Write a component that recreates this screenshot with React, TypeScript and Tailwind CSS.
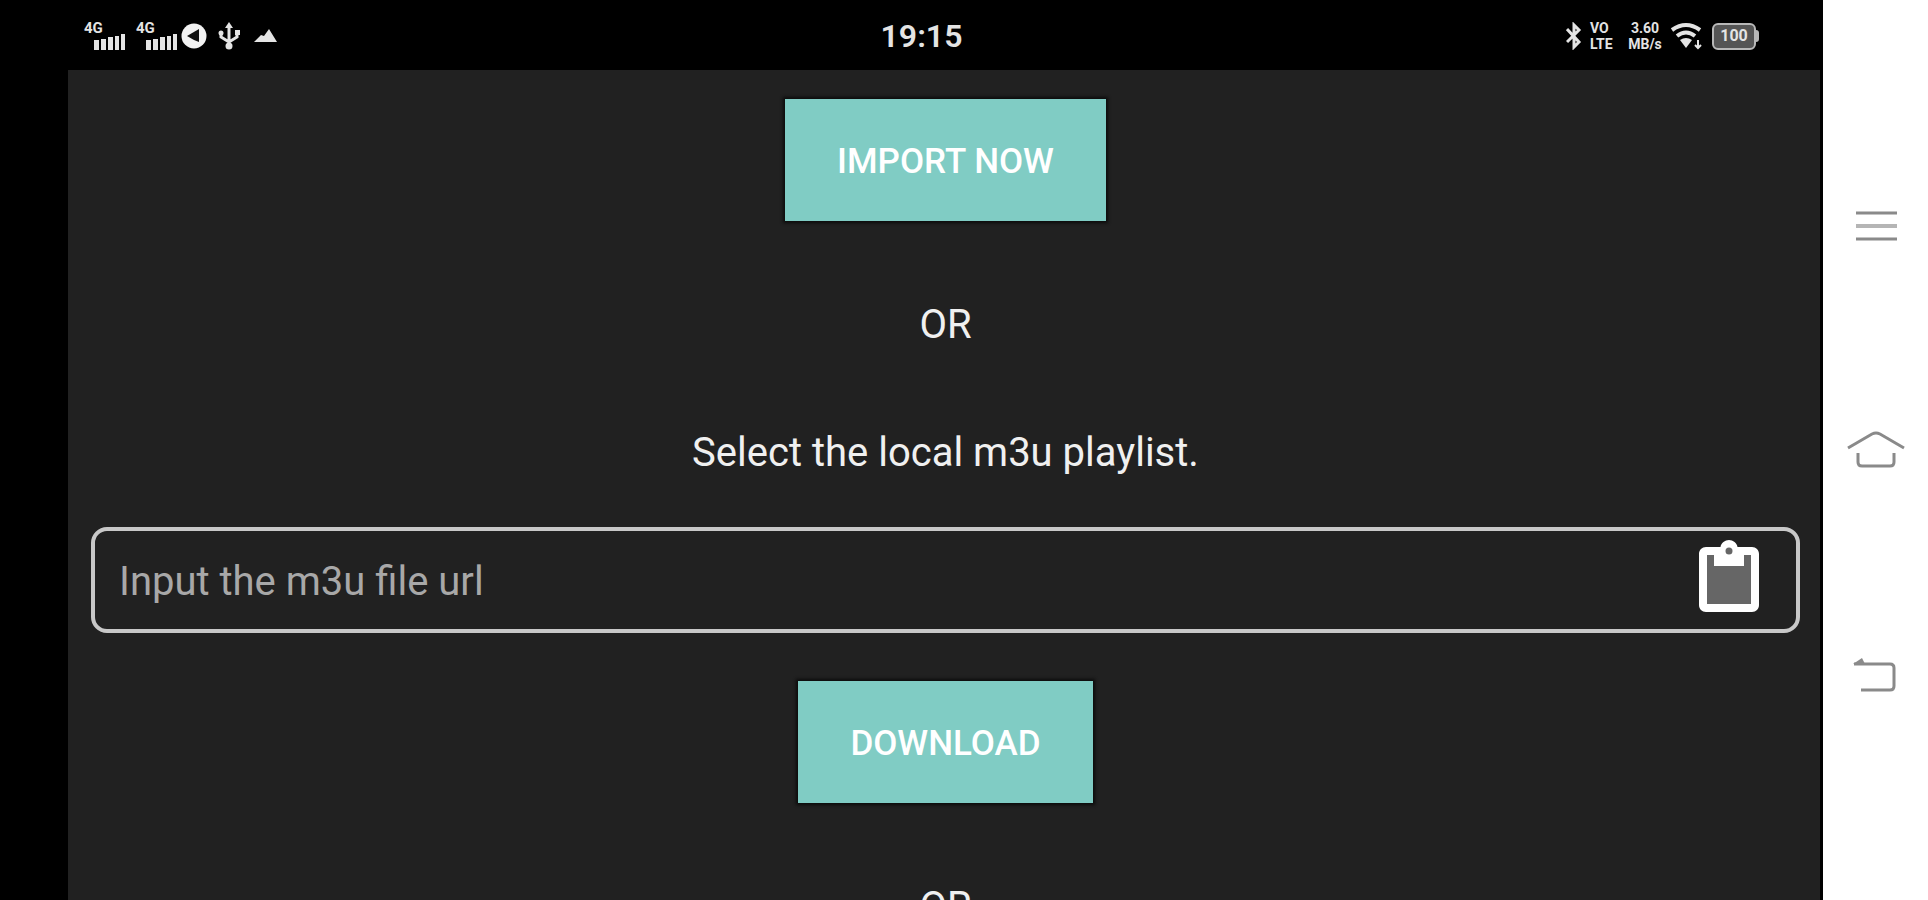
import React, { useState } from "react";

interface ActionButtonProps {
  children: React.ReactNode;
  onClick?: () => void;
}

function ActionButton({ children, onClick }: ActionButtonProps) {
  return (
    <button
      type="button"
      onClick={onClick}
      className="h-[122px] shrink-0 px-[52px] pt-1 bg-[#80ccc4] text-white text-[35px] leading-10 font-medium uppercase whitespace-nowrap shadow-[0_0_3px_2px_#0c0c0c]"
    >
      {children}
    </button>
  );
}

function Signal() {
  return (
    <div className="flex flex-col w-[42px]">
      <span className="text-[15px] leading-3 font-bold">4G</span>
      <svg viewBox="0 0 32 16" className="w-8 h-4 self-end" fill="currentColor">
        <rect x="0" y="6" width="5" height="10" />
        <rect x="7" y="5" width="5" height="11" />
        <rect x="14" y="3" width="5" height="13" />
        <rect x="21" y="2" width="4" height="14" />
        <rect x="27" y="0" width="4" height="16" />
      </svg>
    </div>
  );
}

function StatusBar() {
  return (
    <header className="grid grid-cols-[1fr_auto_1fr] items-center h-[70px] shrink-0 pl-[84px] pr-[64px] pt-0.5 bg-black text-[#e4e4e4]">
      <div className="flex items-center gap-2.5">
        <Signal />
        <Signal />
        {/* Messenger notification */}
        <svg viewBox="0 0 28 28" className="w-7 h-7 -ml-2" >
          <circle cx="14" cy="14" r="12.5" fill="#f2f2f2" />
          <path d="M7 14l12-7v13l-5-2z" fill="#111" />
        </svg>
        {/* USB */}
        <svg viewBox="0 0 22 28" className="w-[22px] h-7" fill="none" stroke="currentColor" strokeWidth="3">
          <path d="M11 3v23M3 10v5l8 5 8-5v-5" />
          <path d="M11 0l4 6H7z" fill="currentColor" stroke="none" />
          <circle cx="3" cy="11" r="2.5" fill="currentColor" stroke="none" />
          <rect x="17" y="8" width="5" height="5" fill="currentColor" stroke="none" />
          <circle cx="11" cy="24" r="3.5" fill="currentColor" stroke="none" />
        </svg>
        <svg viewBox="0 0 24 14" className="w-6 h-3.5 ml-1" fill="currentColor">
          <path d="M0 13l7-7 3 1 5-7 8 13z" />
        </svg>
      </div>

      <time className="text-[32px] leading-9 font-semibold">19:15</time>

      <div className="flex items-center justify-end gap-2">
        {/* Bluetooth */}
        <svg viewBox="0 0 16 28" className="w-4 h-7" fill="none" stroke="currentColor" strokeWidth="3">
          <path d="M1 7l12 13-5 5V3l5 5L1 20" />
        </svg>
        <div className="flex flex-col w-[30px] text-[14px] leading-4 font-bold">
          <span>VO</span>
          <span>LTE</span>
        </div>
        <div className="flex flex-col items-center w-[34px] text-[14px] leading-4 font-bold">
          <span>3.60</span>
          <span>MB/s</span>
        </div>
        {/* Wi-Fi */}
        <svg viewBox="0 0 34 28" className="w-[34px] h-7" fill="none" stroke="currentColor" strokeWidth="4">
          <path d="M2 8q14-10 28 0M7 14q9-7 18 0" />
          <path d="M16 26l-6-8q6-4 12 0z" fill="currentColor" stroke="none" />
          <path d="M28 18v8M25 23l3 3 3-3" strokeWidth="2" />
        </svg>
        <div className="flex items-center">
          <div className="flex items-center justify-center w-11 h-[27px] border-2 border-[#b8b8b8] rounded-md bg-[#555] text-[16px] leading-5 font-bold">
            100
          </div>
          <div className="w-[3px] h-3 rounded-r bg-[#b8b8b8]" />
        </div>
      </div>
    </header>
  );
}

function ClipboardIcon() {
  return (
    <svg viewBox="0 0 60 72" className="w-[60px] h-[72px]">
      <rect x="4" y="10" width="52" height="58" rx="4" fill="#666" />
      <path
        d="M7 7h14.5C22 3 26 0 30 0s8 3 8.500 7H53c4 0 7 3 7 7v51c0 4-3 7-7 7H7c-4 0-7-3-7-7V14c0-4 3-7 7-7zm1 8v49h44V15h-7v11H15V15z"
        fill="#fff"
        fillRule="evenodd"
      />
      <circle cx="30" cy="11" r="3.5" fill="#666" />
    </svg>
  );
}

function NavigationBar() {
  return (
    <nav className="flex flex-col w-[105px] shrink-0 pt-[181px] items-center gap-[137px] bg-white text-[#8a8a8a]">
      <button type="button" aria-label="Recent apps">
        <svg viewBox="0 0 60 90" className="w-[60px] h-[90px]" fill="none" stroke="currentColor" strokeWidth="3">
          <path d="M10 32h41M10 58h41" />
          <path d="M10 45h41" stroke="#b5b5b5" strokeWidth="4" />
        </svg>
      </button>
      <button type="button" aria-label="Home">
        <svg viewBox="0 0 60 90" className="w-[60px] h-[90px]" fill="none" stroke="currentColor" strokeWidth="3">
          <path d="M2 40l24-14q4-2 8 0l24 14" />
          <path d="M12 45v9q0 4 4 4h28q4 0 4-4v-9" />
        </svg>
      </button>
      <button type="button" aria-label="Back">
        <svg viewBox="0 0 60 90" className="w-[60px] h-[90px]" fill="none" stroke="currentColor" strokeWidth="3">
          <path d="M8 29h36q4 0 4 4v18q0 4-4 4H15" />
          <path d="M7 29l9-6 3 6z" fill="currentColor" stroke="none" />
        </svg>
      </button>
    </nav>
  );
}

export default function App() {
  const [url, setUrl] = useState("");

  return (
    <div className="flex h-screen overflow-hidden bg-black font-[Roboto,sans-serif]">
      <div className="flex flex-col flex-1 min-w-0">
        <StatusBar />
        <main className="flex flex-col flex-1 min-h-0 items-center ml-[68px] mr-[3px] pl-[23px] pr-5 pt-[29px] overflow-hidden bg-[#212121] text-[#f0f0f0] text-[40px] leading-[48px]">
          <ActionButton>Import now</ActionButton>
          <p className="mt-20">OR</p>
          <p className="mt-20">Select the local m3u playlist.</p>

          <div className="flex items-center w-full h-[106px] shrink-0 mt-[50px] pl-6 pr-[37px] border-4 border-[#c8c8c8] rounded-2xl">
            <input
              type="text"
              aria-label="m3u file url"
              placeholder="Input the m3u file url"
              value={url}
              onChange={(e) => setUrl(e.target.value)}
              className="flex-1 min-w-0 pt-1 bg-transparent outline-none placeholder:text-[#a8a8a8]"
            />
            <button type="button" aria-label="Paste" className="pb-2">
              <ClipboardIcon />
            </button>
          </div>

          <div className="flex mt-12 shrink-0">
            <ActionButton>Download</ActionButton>
          </div>
          <p className="mt-20 shrink-0">OR</p>
        </main>
      </div>
      <NavigationBar />
    </div>
  );
}
